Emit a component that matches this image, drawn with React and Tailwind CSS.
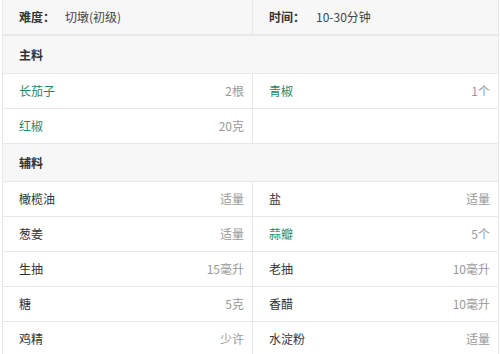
import React from "react";

const GREEN = "text-[#1e8a6a]";

function Cell({ name, qty, green, right }) {
  return (
    <div
      className={`flex items-center justify-between pl-4 pr-2 ${right ? "" : "border-r border-[#e8e8e8]"}`}
    >
      <span className={green ? GREEN : "text-[#333]"}>{name}</span>
      <span className="text-[#999]">{qty}</span>
    </div>
  );
}

function Row({ left, right }) {
  return (
    <div className="grid grid-cols-[250px_1fr] h-[35px] border-b border-[#e8e8e8]">
      {left ? <Cell {...left} /> : <div className="border-r border-[#e8e8e8]" />}
      {right ? <Cell {...right} right /> : <div />}
    </div>
  );
}

function Section({ title }) {
  return (
    <div className="h-[38px] flex items-center pl-4 bg-[#f7f7f7] border-b border-[#e8e8e8] font-bold text-[#333]">
      {title}
    </div>
  );
}

export default function App() {
  const main = [
    [{ name: "长茄子", qty: "2根", green: true }, { name: "青椒", qty: "1个", green: true }],
    [{ name: "红椒", qty: "20克", green: true }, null],
  ];
  const aux = [
    [{ name: "橄榄油", qty: "适量" }, { name: "盐", qty: "适量" }],
    [{ name: "葱姜", qty: "适量" }, { name: "蒜瓣", qty: "5个", green: true }],
    [{ name: "生抽", qty: "15毫升" }, { name: "老抽", qty: "10毫升" }],
    [{ name: "糖", qty: "5克" }, { name: "香醋", qty: "10毫升" }],
    [{ name: "鸡精", qty: "少许" }, { name: "水淀粉", qty: "适量" }],
  ];
  return (
    <div
      className="w-[500px] h-[354px] overflow-hidden bg-white text-[12px] leading-none"
      style={{ fontFamily: '"Noto Sans CJK SC", "Noto Sans", sans-serif' }}
    >
      <div className="ml-[2px] w-[497px] border-l border-r border-[#e8e8e8]">
        <div className="grid grid-cols-[250px_1fr] h-[36px] bg-[#f7f7f7] border-b-2 border-[#e8e8e8]">
          <div className="flex items-center pl-4 border-r border-[#e8e8e8]">
            <span className="font-bold text-[#333] w-[46px]">难度：</span>
            <span className="text-[#444]">切墩(初级)</span>
          </div>
          <div className="flex items-center pl-4">
            <span className="font-bold text-[#333] w-[47px]">时间：</span>
            <span className="text-[#444]">10-30分钟</span>
          </div>
        </div>
        <Section title="主料" />
        {main.map((r, i) => (
          <Row key={i} left={r[0]} right={r[1]} />
        ))}
        <Section title="辅料" />
        {aux.map((r, i) => (
          <Row key={i} left={r[0]} right={r[1]} />
        ))}
      </div>
    </div>
  );
}
